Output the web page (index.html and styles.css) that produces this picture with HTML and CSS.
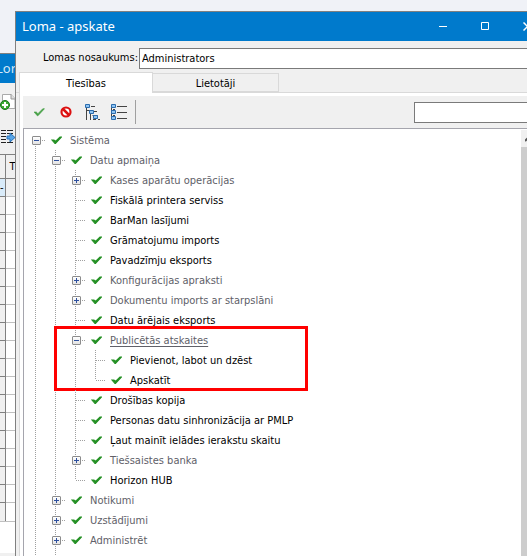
FILE: index.html
```html
<!DOCTYPE html>
<html lang="lv">
<head>
<meta charset="utf-8">
<title>Loma - apskate</title>
<link rel="stylesheet" href="styles.css">
</head>
<body>
<svg class="defs" aria-hidden="true">
  <symbol id="check" viewBox="0 0 11 10"><path d="M1 5h2l1.500 1.500L9 2h1.500L4.500 8.500H4z" fill="#259025" stroke="#259025" stroke-width="1.100"/></symbol>
</svg>
<div class="desktop">
  <section class="back" aria-label="Lomas">
    <header class="back-title"><span>Lor</span></header>
    <div class="back-tools">
      <svg width="15" height="18" viewBox="0 0 15 18"><path d="M2.500 1.500h8.500l4 4v10H2.500z" fill="#fff" stroke="#aaa"/><path d="M11 1v5h4" fill="#ddd" stroke="#999"/><circle cx="5" cy="12" r="4.500" fill="#3caa32" stroke="#16731a"/><path d="M2 12h6M5 9v6" stroke="#fff" stroke-width="2"/></svg>
      <svg width="15" height="16" viewBox="0 0 15 16"><path d="M1 2.500h5M7 2.500h6M1 5.500h5M7 5.500h6M1 8.500h5M1 11.500h5M1 14.500h5M7 14.500h6" stroke="#222"/><path d="M7 8h3V5l5 4.500-5 4.500v-3H7z" fill="#58a6e8" stroke="#2a72b8"/></svg>
    </div>
    <table class="grid">
      <thead><tr><th></th><th>T</th></tr></thead>
      <tbody>
        <tr class="current"><td>-</td><td></td></tr>
        <tr><td></td><td></td></tr><tr><td></td><td></td></tr><tr><td></td><td></td></tr>
        <tr><td></td><td></td></tr><tr><td></td><td></td></tr><tr><td></td><td></td></tr>
        <tr><td></td><td></td></tr><tr><td></td><td></td></tr><tr><td></td><td></td></tr>
        <tr><td></td><td></td></tr><tr><td></td><td></td></tr><tr><td></td><td></td></tr>
        <tr><td></td><td></td></tr><tr><td></td><td></td></tr><tr><td></td><td></td></tr>
        <tr><td></td><td></td></tr><tr><td></td><td></td></tr><tr><td></td><td></td></tr>
      </tbody>
    </table>
    <div class="back-empty"></div>
    <div class="back-foot"></div>
  </section>

  <main class="window">
    <header class="titlebar">
      <h1>Loma - apskate</h1>
      <button type="button" aria-label="Minimizēt"><svg width="9" height="9"><path d="M0 4.500h8" stroke="#fff"/></svg></button>
      <button type="button" aria-label="Maksimizēt"><svg width="9" height="9"><path d="M.5.5h7v7h-7z" fill="none" stroke="#fff"/></svg></button>
      <button type="button" aria-label="Aizvērt"><svg width="9" height="9"><path d="M.5.5l8 8M8.500.5l-8 8" stroke="#fff" stroke-width="1.500"/></svg></button>
    </header>
    <div class="field">
      <label for="name">Lomas nosaukums:</label>
      <input id="name" type="text" value="Administrators">
    </div>
    <div class="tabs" role="tablist">
      <button type="button" class="tab active" role="tab" aria-selected="true">Tiesības</button>
      <button type="button" class="tab" role="tab" aria-selected="false">Lietotāji</button>
    </div>
    <section class="panel">
      <div class="toolbar">
        <button type="button" aria-label="Atļaut"><svg width="12" height="12" viewBox="0 0 11 10"><path d="M1 5h2l1.500 1.500L9 2h1.500L4.500 8.500H4z" fill="#46a046" stroke="#46a046" stroke-width=".6"/></svg></button>
        <button type="button" aria-label="Aizliegt"><svg width="12" height="12"><circle cx="6" cy="6" r="4.500" fill="#fff" stroke="#dc1010" stroke-width="2.200"/><path d="M3 3l6 6" stroke="#dc1010" stroke-width="2.500"/></svg></button>
        <button type="button" aria-label="Izvērst koku"><svg width="17" height="17"><path d="M2.500 4v12M7 2.500h4M3 6.500h5M6.500 7v9M8.500 11.500h5M9 15.500h3M14 15.500h2M9 7.500h4" stroke="#444" fill="none"/><g fill="#8fc4f2" stroke="#2b6cae"><path d="M1.500.5h4v3h-4zM5.500 6.500h4v3h-4zM9.500 11.500h4v3h-4z"/></g></svg></button>
        <button type="button" aria-label="Saraksts"><svg width="17" height="17"><path d="M1.500 2v13M7 2.500h10M7 8.500h10M7 14.500h10M3 5.500h2M3 11.500h2" stroke="#444"/><g fill="#8fc4f2" stroke="#2b6cae"><path d="M1.500.5h4v3h-4zM1.500 6.500h4v3h-4zM1.500 12.500h4v3h-4z"/></g></svg></button>
        <span class="sep"></span>
        <input class="search" type="search" aria-label="Meklēt">
      </div>
      <div class="view">
        <ul class="tree root" role="tree">
          <li><div class="row group"><button type="button" class="exp open" aria-label="Sakļaut"></button><svg class="ck"><use href="#check"/></svg><span>Sistēma</span></div>
            <ul class="tree">
              <li><div class="row group"><button type="button" class="exp open" aria-label="Sakļaut"></button><svg class="ck"><use href="#check"/></svg><span>Datu apmaiņa</span></div>
                <ul class="tree">
                  <li><div class="row group"><button type="button" class="exp" aria-label="Izvērst"></button><svg class="ck"><use href="#check"/></svg><span>Kases aparātu operācijas</span></div></li>
                  <li><div class="row"><i class="leaf"></i><svg class="ck"><use href="#check"/></svg><span>Fiskālā printera serviss</span></div></li>
                  <li><div class="row"><i class="leaf"></i><svg class="ck"><use href="#check"/></svg><span>BarMan lasījumi</span></div></li>
                  <li><div class="row"><i class="leaf"></i><svg class="ck"><use href="#check"/></svg><span>Grāmatojumu imports</span></div></li>
                  <li><div class="row"><i class="leaf"></i><svg class="ck"><use href="#check"/></svg><span>Pavadzīmju eksports</span></div></li>
                  <li><div class="row group"><button type="button" class="exp" aria-label="Izvērst"></button><svg class="ck"><use href="#check"/></svg><span>Konfigurācijas apraksti</span></div></li>
                  <li><div class="row group"><button type="button" class="exp" aria-label="Izvērst"></button><svg class="ck"><use href="#check"/></svg><span>Dokumentu imports ar starpslāni</span></div></li>
                  <li><div class="row"><i class="leaf"></i><svg class="ck"><use href="#check"/></svg><span>Datu ārējais eksports</span></div></li>
                  <li class="marked"><div class="row group"><button type="button" class="exp open" aria-label="Sakļaut"></button><svg class="ck"><use href="#check"/></svg><span class="focus">Publicētās atskaites</span></div>
                    <ul class="tree">
                      <li><div class="row"><i class="leaf"></i><svg class="ck"><use href="#check"/></svg><span>Pievienot, labot un dzēst</span></div></li>
                      <li class="last"><div class="row"><i class="leaf"></i><svg class="ck"><use href="#check"/></svg><span>Apskatīt</span></div></li>
                    </ul>
                  </li>
                  <li><div class="row"><i class="leaf"></i><svg class="ck"><use href="#check"/></svg><span>Drošības kopija</span></div></li>
                  <li><div class="row"><i class="leaf"></i><svg class="ck"><use href="#check"/></svg><span>Personas datu sinhronizācija ar PMLP</span></div></li>
                  <li><div class="row"><i class="leaf"></i><svg class="ck"><use href="#check"/></svg><span>Ļaut mainīt ielādes ierakstu skaitu</span></div></li>
                  <li><div class="row group"><button type="button" class="exp" aria-label="Izvērst"></button><svg class="ck"><use href="#check"/></svg><span>Tiešsaistes banka</span></div></li>
                  <li class="last"><div class="row"><i class="leaf"></i><svg class="ck"><use href="#check"/></svg><span>Horizon HUB</span></div></li>
                </ul>
              </li>
              <li><div class="row group"><button type="button" class="exp" aria-label="Izvērst"></button><svg class="ck"><use href="#check"/></svg><span>Notikumi</span></div></li>
              <li><div class="row group"><button type="button" class="exp" aria-label="Izvērst"></button><svg class="ck"><use href="#check"/></svg><span>Uzstādījumi</span></div></li>
              <li><div class="row group"><button type="button" class="exp" aria-label="Izvērst"></button><svg class="ck"><use href="#check"/></svg><span>Administrēt</span></div></li>
              <li><div class="row"><i class="leaf"></i><svg class="ck"><use href="#check"/></svg><span>Saimnieciskās darbības vadība</span></div></li>
            </ul>
          </li>
        </ul>
        <div class="scroll"><button type="button" aria-label="Ritināt augšup"><svg width="9" height="6"><path d="M0 5l4.500-4.500L9 5" fill="none" stroke="#555" stroke-width="2"/></svg></button></div>
      </div>
    </section>
  </main>
</div>
</body>
</html>
```
FILE: styles.css
```css
*, *::before, *::after { box-sizing: border-box; }
body {
  margin: 0;
  height: 100vh;
  overflow: hidden;
  background: #f0f2f7;
  color: #000;
  font: 11px/20px "DejaVu Sans Condensed", "Noto Sans", sans-serif;
}
button, input { font: inherit; color: inherit; }
button { padding: 0; border: 0; background: none; display: flex; align-items: center; justify-content: center; }
svg { display: block; flex: none; }
.defs { display: none; }
.desktop { display: flex; height: 100vh; overflow: hidden; }

.back { flex: 0 0 15px; overflow: hidden; margin-top: 53px; border-top: 1px solid #808080; background: #f0f0f0; display: flex; flex-direction: column; }
.back-title { flex: none; height: 29px; background: #007acc; color: #d5e8f8; font: 13px/28px "Noto Sans", sans-serif; }
.back-title span { margin-left: -4px; }
.back-tools { flex: none; height: 71px; padding-top: 10px; display: flex; flex-direction: column; gap: 17px; }
.grid { flex: none; border-collapse: collapse; table-layout: fixed; width: 100%; background: #fff; line-height: 12px; }
.grid th, .grid td { padding: 0; height: 18px; border-top: 1px solid #c0c0c0; font-weight: normal; text-align: left; overflow: hidden; }
.grid th { height: 24px; border-color: #808080; background: #f0f0f0; padding-left: 4px; }
.grid th:first-child, .grid td:first-child { width: 5px; padding: 0; border-right: 1px solid #808080; border-top-color: #808080; background: #f0f0f0; }
.grid .current td { background: #f0f0f0; border-top-color: #808080; }
.grid .current td:first-child { background: #d9ebf9; }
.back-empty { flex: 1; background: #fff; border-top: 1px solid #c0c0c0; }
.back-foot { flex: none; height: 3px; }

.window { flex: 1; min-width: 0; margin: 11px -21px 0 0; border-left: 1px solid #808080; border-top: 1px solid #808080; background: #f0f0f0; display: flex; flex-direction: column; }
.titlebar { flex: none; height: 29px; display: flex; background: #007acc; color: #fff; }
.titlebar h1 { flex: 1; margin: 0; padding-left: 6px; font: 13px/28px "Noto Sans", sans-serif; }
.titlebar button { width: 42px; }
.field { flex: none; display: flex; gap: 6px; padding: 7px 10px 3px 27px; }
.field input { flex: 1; min-width: 0; height: 21px; padding: 0 2px; border: 1px solid #7a7a7a; background: #fff; outline: 0; }
.field label { line-height: 20px; width: 90px; text-align: right; white-space: nowrap; }
.tabs { flex: none; display: flex; align-items: flex-end; height: 21px; padding-left: 3px; border-bottom: 1px solid #d9d9d9; }
.tab { height: 19px; width: 126px; padding-top: 2px; border: 1px solid #d9d9d9; border-left: 0; }
.tab.active { height: 21px; width: 134px; border-left: 1px solid #d9d9d9; border-bottom: 0; background: #fff; margin-bottom: -1px; }
.panel { flex: 1; min-height: 0; margin: 0 6px 0 3px; padding: 3px 4px 0 3px; border-left: 1px solid #d9d9d9; background: #fff; display: flex; flex-direction: column; }
.toolbar { flex: none; height: 32px; padding: 0 0 0 10px; display: flex; align-items: center; gap: 15px; background: #f0f0f0; }
.toolbar button + button + button { margin: 0 -3px; }
.sep { width: 1px; height: 24px; background: #a0a0a0; margin-left: -4px; }
.search { appearance: none; margin-left: auto; width: 124px; height: 21px; padding: 0 2px; border: 1px solid #7a7a7a; border-radius: 0; background: #fff; outline: 0; }

.view { flex: 1; min-height: 0; display: flex; border: 1px solid #a5a5ad; border-width: 1px 0 0 1px; overflow: hidden; }
.tree { list-style: none; margin: 0; padding: 0 0 0 20px; }
.root { flex: 1; padding: 1px 0 0 8px; }
.tree li { position: relative; }
.tree li::before { content: ""; position: absolute; left: 3px; top: 0; bottom: 0; width: 1px; background: repeating-linear-gradient(#a0a0a0 0 1px, transparent 1px 2px); }
.root > li::before { top: 10px; }
.tree li.last::before { bottom: auto; height: 10px; }
.row { position: relative; height: 20px; display: flex; align-items: center; white-space: nowrap; }
.row span { padding-top: 2px; }
.group { color: #606068; }
.exp { position: relative; width: 9px; height: 9px; margin-right: 10px; border: 1px solid #8c8c8c; border-radius: 1px; background: linear-gradient(#2c4f9e, #2c4f9e) 1px 3px / 5px 1px no-repeat, linear-gradient(#2c4f9e, #2c4f9e) 3px 1px / 1px 5px no-repeat, linear-gradient(#fff, #e2e2e2); }
.exp.open { background: linear-gradient(#2c4f9e, #2c4f9e) 1px 3px / 5px 1px no-repeat, linear-gradient(#fff, #e2e2e2); }
.exp::after { content: ""; position: absolute; left: 9px; top: 3px; width: 4px; height: 1px; background: repeating-linear-gradient(90deg, #a0a0a0 0 1px, transparent 1px 2px); }
.leaf { width: 9px; height: 1px; margin: 0 6px 0 4px; background: repeating-linear-gradient(90deg, #a0a0a0 0 1px, transparent 1px 2px); }
.ck { width: 11px; height: 10px; margin-right: 8px; }
.focus { text-decoration: underline; text-underline-offset: 2px; }
.marked::after { content: ""; position: absolute; left: -18px; top: -4px; width: 254px; height: 65px; border: 3px solid #f00; pointer-events: none; }
.scroll { flex: 0 0 17px; margin-top: 1px; background: #cdcdcd; }
.scroll button { width: 17px; height: 17px; background: #f0f0f0; }
```
